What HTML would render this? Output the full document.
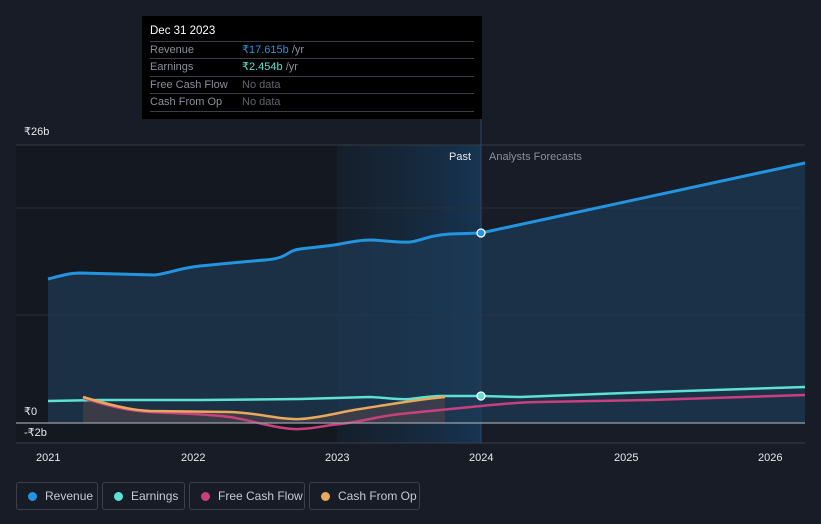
<!DOCTYPE html><html><head><style>
body{margin:0;width:821px;height:524px;background:#171c26;font-family:"Liberation Sans",sans-serif;overflow:hidden;position:relative}
.tt{position:absolute;left:142px;top:16px;width:340px;height:103px;background:#000;color:#fff;font-size:11px}
.tt .h{position:absolute;left:8px;top:9px;font-size:11.5px}
.tt .r{position:absolute;left:8px;width:324px;border-top:1px solid #3a3f47;height:17px;line-height:17px;color:#8a8f98}
.tt .r span{position:absolute;left:92px}
.leg{position:absolute;top:482px;height:28px;border:1px solid #3b414c;border-radius:3px;color:#c6cad1;font-size:12px;line-height:26px;box-sizing:border-box}
.leg i{position:absolute;left:11px;top:9px;width:9px;height:9px;border-radius:50%}
.leg b{font-weight:normal;position:absolute;left:28px}
</style></head><body>
<svg width="821" height="524" style="position:absolute;left:0;top:0">
<defs><linearGradient id="hl" x1="0" x2="1"><stop offset="0" stop-color="#17283a" stop-opacity=".4"/><stop offset="1" stop-color="#173452"/></linearGradient></defs>
<rect x="16" y="145" width="465" height="298" fill="#141921"/>
<rect x="337" y="145" width="144" height="298" fill="url(#hl)"/>
<line x1="16" y1="145" x2="805" y2="145" stroke="#343b47"/>
<line x1="16" y1="208" x2="805" y2="208" stroke="#2a303b"/>
<line x1="16" y1="315" x2="805" y2="315" stroke="#2a303b"/>
<line x1="16" y1="443" x2="805" y2="443" stroke="#3a404b"/>
<line x1="481" y1="118" x2="481" y2="443" stroke="#2a4a6a"/>
<path d="M48,279 C60,276 70,273 80,273 L155,275 C170,273 180,268 200,266 S240,262 265,260 S285,251 300,249 S330,246 340,244 S360,240 370,240 S400,243 410,242 S430,235 450,234 L481,233 L805,163 L805,423 L48,423Z" fill="#1e3a55" opacity=".7"/>
<path d="M48,279 C60,276 70,273 80,273 L155,275 C170,273 180,268 200,266 S240,262 265,260 S285,251 300,249 S330,246 340,244 S360,240 370,240 S400,243 410,242 S430,235 450,234 L481,233 L805,163" fill="none" stroke="#2394e0" stroke-width="3"/>
<path d="M83,397 C110,405 130,410 150,411 L230,412 C260,413 280,420 300,419 S340,412 360,409 S420,399 445,397 L445,423 L83,423Z" fill="#5a4548" opacity=".5"/>
<path d="M48,401 L100,400 L200,400 L300,399 L370,397 C390,398 400,400 410,399 S430,396 440,396 L481,396 L520,397 L625,393 L805,387" fill="none" stroke="#5ee1d2" stroke-width="2.5"/>
<path d="M83,398 C110,407 130,411 150,412 S210,414 230,417 S280,430 300,429 S320,426 340,424 S380,416 400,414 S460,408 481,406 S520,402 540,402 L650,400 L805,395" fill="none" stroke="#c9407e" stroke-width="2.5"/>
<path d="M83,397 C110,405 130,410 150,411 L230,412 C260,413 280,420 300,419 S340,412 360,409 S420,399 445,397" fill="none" stroke="#e8a95b" stroke-width="2.5"/>
<line x1="16" y1="423" x2="805" y2="423" stroke="#9aa0a8" stroke-width="1.2"/>
<circle cx="481" cy="233" r="4" fill="#2394e0" stroke="#fff" stroke-width="1.3"/>
<circle cx="481" cy="396" r="4" fill="#5ee1d2" stroke="#fff" stroke-width="1.3"/>
<g fill="#e6e8eb" font-size="11" font-family="Liberation Sans">
<text x="24" y="135">₹26b</text><text x="24" y="415">₹0</text><text x="24" y="436">-₹2b</text>
<text x="36" y="461">2021</text><text x="181" y="461">2022</text><text x="325" y="461">2023</text><text x="469" y="461">2024</text><text x="614" y="461">2025</text><text x="758" y="461">2026</text>
<text x="449" y="160">Past</text><text x="489" y="160" fill="#8a8f98">Analysts Forecasts</text></g>
</svg>
<div class="tt"><div class="h">Dec 31 2023</div>
<div class="r" style="top:25px">Revenue<span><em style="font-style:normal;color:#2394e0">₹17.615b</em> /yr</span></div>
<div class="r" style="top:42px">Earnings<span><em style="font-style:normal;color:#5ee1d2">₹2.454b</em> /yr</span></div>
<div class="r" style="top:60px">Free Cash Flow<span style="color:#5f646c">No data</span></div>
<div class="r" style="top:77px;border-bottom:1px solid #3a3f47">Cash From Op<span style="color:#5f646c">No data</span></div></div>
<div class="leg" style="left:16px;width:82px"><i style="background:#2394e0"></i><b>Revenue</b></div>
<div class="leg" style="left:102px;width:83px"><i style="background:#5ee1d2"></i><b>Earnings</b></div>
<div class="leg" style="left:189px;width:116px"><i style="background:#c9407e"></i><b>Free Cash Flow</b></div>
<div class="leg" style="left:309px;width:111px"><i style="background:#e8a95b"></i><b>Cash From Op</b></div>
</body></html>
